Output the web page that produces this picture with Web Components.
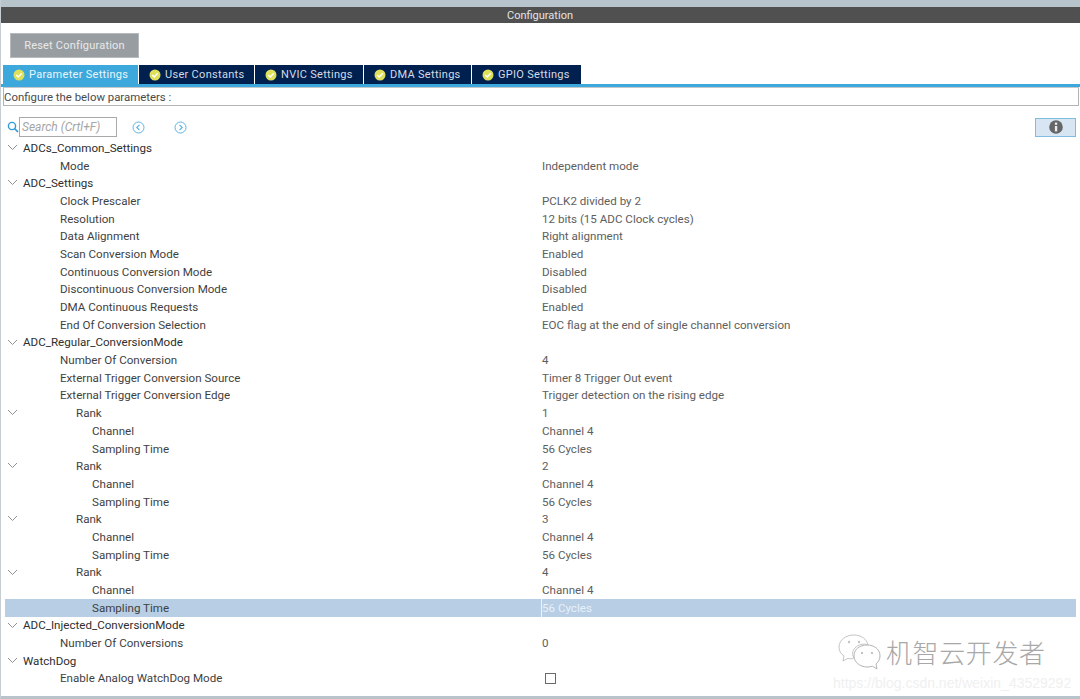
<!DOCTYPE html>
<html>
<head>
<meta charset="utf-8">
<title>Configuration</title>
<style>
  html, body { margin: 0; height: 100%; background: #fff; overflow: hidden; }
  body { font-family: Roboto, "Liberation Sans", Arial, sans-serif; font-size: 12px; color: #3c3c3c; }
</style>
</head>
<body>
<config-panel></config-panel>
<script>
const CHEVRON = `<svg width="11" height="7" viewBox="0 0 11 7"><path d="M1 1 L5.5 5.5 L10 1" fill="none" stroke="#8d9296" stroke-width="1"/></svg>`;

class ConfigTab extends HTMLElement {
  constructor() {
    super();
    this.attachShadow({ mode: 'open' }).innerHTML = `
      <style>
        :host {
          display: flex;
          align-items: center;
          box-sizing: border-box;
          height: 19px;
          padding-left: 10px;
          gap: 4px;
          background: #002050;
          color: #d4dbe4;
          font-size: 11px;
          letter-spacing: 0.3px;
          white-space: nowrap;
        }
        :host([active]) { background: #3ca8dc; color: #eaf5fb; }
        svg { flex: none; }
      </style>
      <svg width="12" height="12" viewBox="0 0 12 12">
        <circle cx="6" cy="6" r="5.5" fill="#dfe05a"/>
        <path d="M3.2 6 L5.2 8 L8.8 4.3" fill="none" stroke="#fff" stroke-width="1.5"/>
      </svg>
      <slot></slot>`;
  }
}

class SearchBar extends HTMLElement {
  constructor() {
    super();
    const nav = d => `<svg width="13" height="13" viewBox="0 0 13 13"><circle cx="6.5" cy="6.5" r="5.5" fill="none" stroke="#5ab4e4" stroke-width="1"/><path d="${d}" fill="none" stroke="#5ab4e4" stroke-width="1.2"/></svg>`;
    this.attachShadow({ mode: 'open' }).innerHTML = `
      <style>
        :host {
          display: flex;
          align-items: center;
          box-sizing: border-box;
          height: 20px;
          padding: 0 4px 0 6px;
        }
        .field {
          box-sizing: border-box;
          width: 98px;
          height: 20px;
          margin-left: 0;
          padding-left: 2px;
          border: 1px solid #a9a9a9;
          font-style: italic;
          font-size: 12px;
          line-height: 18px;
          color: #a5a5a5;
          white-space: nowrap;
        }
        .prev, .next { line-height: 0; height: 13px; }
        .prev { margin-left: 15px; }
        .next { margin-left: 29px; }
        .info {
          box-sizing: border-box;
          width: 41px;
          height: 19px;
          margin-left: auto;
          display: flex;
          align-items: center;
          justify-content: center;
          background: #d8e6f4;
          border: 1px solid #7fbde0;
        }
      </style>
      <svg width="12" height="12" viewBox="0 0 12 12"><circle cx="5" cy="5" r="3.6" fill="none" stroke="#2f9bd8" stroke-width="1.4"/><path d="M7.6 7.6 L11 11" stroke="#2f9bd8" stroke-width="1.6"/></svg>
      <div class="field">Search (Crtl+F)</div>
      <span class="prev">${nav('M7.5 3.8 L4.8 6.5 L7.5 9.2')}</span>
      <span class="next">${nav('M5.5 3.8 L8.2 6.5 L5.5 9.2')}</span>
      <div class="info">
        <svg width="14" height="14" viewBox="0 0 14 14">
          <circle cx="7" cy="7" r="6.8" fill="#666"/>
          <rect x="5.9" y="2.6" width="2.3" height="2.2" fill="#e8eef5"/>
          <rect x="5.9" y="6" width="2.3" height="5.4" fill="#e8eef5"/>
        </svg>
      </div>`;
  }
}

class ParamTree extends HTMLElement {
  constructor() {
    super();
    this.attachShadow({ mode: 'open' }).innerHTML = `
      <style>
        :host { display: block; font-size: 11.6px; color: #3f3f3f; }
        .row {
          display: grid;
          grid-template-columns: 536px 1fr;
          height: 17.7px;
          align-items: center;
          white-space: nowrap;
          position: relative;
        }
        .label { display: flex; align-items: center; height: 100%; }
        .chev { position: absolute; left: 2px; top: 5px; line-height: 0; }
        .value { color: #5e5e5e; height: 100%; display: flex; align-items: center; padding-left: 1px; }
        .l0 { padding-left: 18px; color: #2e2e2e; }
        .l1 { padding-left: 55px; }
        .l2 { padding-left: 71px; }
        .l3 { padding-left: 87px; }
        .selected { background: #b8cee5; }
        .selected .value { color: #e9f0f7; border-left: 1px solid #edf3f9; padding-left: 0; }
        .check {
          box-sizing: border-box;
          width: 11px;
          height: 11px;
          margin-left: 3px;
          border: 1px solid #6a6a6a;
          background: #fff;
        }
      </style>
      <div id="rows"></div>`;
  }

  set data(items) {
    this.shadowRoot.getElementById('rows').innerHTML = items.map(r => `
      <div class="row ${r.selected ? 'selected' : ''}">
        ${r.open ? `<span class="chev">${CHEVRON}</span>` : ''}
        <div class="label l${r.level}">${r.label}</div>
        <div class="value">${r.check ? '<div class="check"></div>' : (r.value ?? '')}</div>
      </div>`).join('');
  }
}

class WechatMark extends HTMLElement {
  constructor() {
    super();
    this.attachShadow({ mode: 'open' }).innerHTML = `
      <style>
        :host { position: absolute; left: 832px; top: 630px; width: 248px; height: 64px; pointer-events: none; }
        .top { display: flex; align-items: center; height: 44px; padding-left: 4px; gap: 5px; }
        .name {
          font-family: "Noto Sans CJK SC", sans-serif;
          font-size: 26px;
          font-weight: 300;
          letter-spacing: 0.6px;
          color: #a8a8a8;
          line-height: 1;
          white-space: nowrap;
        }
        .url {
          position: absolute;
          left: 0;
          top: 45px;
          font-family: "Liberation Sans", Arial, sans-serif;
          font-size: 14px;
          color: #f0f0f0;
          white-space: nowrap;
        }
      </style>
      <div class="top">
        <svg width="44" height="38" viewBox="0 0 44 38">
          <path d="M17 25 C15 22.5 15 18 18 15 C21 11.5 27 10 31 12 C30 6 24 2 17 2 C9 2 2 7 2 14 C2 18 4 21 7 23 L6 28 L11 25.3 C13 26 15 26 17 25 Z" fill="#fff" stroke="#c4c4c4" stroke-width="1"/>
          <path d="M43 23 C43 16 37 12 30 12 C23 12 17 16 17 23 C17 29 23 34 30 34 C32 34 34 33.8 35.5 33.2 L40 36 L39 31 C41.5 29 43 26 43 23 Z" fill="#fff" stroke="#b4b4b4" stroke-width="1"/>
          <circle cx="12" cy="9" r="1.2" fill="#c2c2c2"/><circle cx="22" cy="9" r="1.2" fill="#c2c2c2"/>
          <circle cx="25" cy="20" r="1.1" fill="#b4b4b4"/><circle cx="35" cy="20" r="1.1" fill="#b4b4b4"/>
        </svg>
        <span class="name">机智云开发者</span>
      </div>
      <div class="url">https://blog.csdn.net/weixin_43529292</div>`;
  }
}

class ConfigPanel extends HTMLElement {
  constructor() {
    super();
    this.attachShadow({ mode: 'open' }).innerHTML = `
      <style>
        :host {
          display: flex;
          flex-direction: column;
          box-sizing: border-box;
          position: relative;
          width: 1080px;
          height: 699px;
          background: #fff;
          border-left: 1px solid #c6ced4;
          overflow: hidden;
        }
        .top { height: 7px; margin-left: -1px; background: #b8c4cb; flex: none; }
        .title {
          height: 16px;
          margin-left: -1px;
          flex: none;
          background: #505050;
          color: #e4e4e4;
          font-size: 11px;
          line-height: 17px;
          text-align: center;
        }
        .reset {
          box-sizing: border-box;
          flex: none;
          align-self: flex-start;
          width: 129px;
          height: 25px;
          margin: 10px 0 0 9px;
          background: #989da1;
          border: 1px solid #b6babd;
          color: #e8eaeb;
          font-size: 11px;
          letter-spacing: 0.2px;
          line-height: 23px;
          text-align: center;
        }
        .tabs { display: flex; gap: 1px; height: 19px; margin: 7px 0 0 2px; flex: none; }
        .tabs config-tab:nth-child(1) { width: 135px; }
        .tabs config-tab:nth-child(2) { width: 115px; }
        .tabs config-tab:nth-child(3) { width: 108px; }
        .tabs config-tab:nth-child(4) { width: 107px; }
        .tabs config-tab:nth-child(5) { width: 109px; }
        .rule { height: 3px; background: #3ca8dc; flex: none; }
        .hint {
          box-sizing: border-box;
          flex: none;
          height: 19px;
          margin-left: 2px;
          margin-right: 1px;
          border: 1px solid #b4b4b4;
          border-top: 1px solid #c4c8cb;
          color: #4a4a4a;
          font-size: 11.4px;
          line-height: 19px;
        }
        search-bar { margin-top: 11px; flex: none; }
        param-tree { margin: 2px 4px 0 4px; flex: none; }
        .bottom { position: absolute; left: -1px; right: 0; bottom: 0; height: 3px; background: #b8c4cb; }
      </style>
      <div class="top"></div>
      <div class="title">Configuration</div>
      <div class="reset">Reset Configuration</div>
      <div class="tabs">
        <config-tab active>Parameter Settings</config-tab>
        <config-tab>User Constants</config-tab>
        <config-tab>NVIC Settings</config-tab>
        <config-tab>DMA Settings</config-tab>
        <config-tab>GPIO Settings</config-tab>
      </div>
      <div class="rule"></div>
      <div class="hint">Configure the below parameters :</div>
      <search-bar></search-bar>
      <param-tree></param-tree>
      <div class="bottom"></div>
      <wechat-mark></wechat-mark>`;

    const rankRows = n => [
      { level: 2, label: 'Rank', value: String(n), open: true },
      { level: 3, label: 'Channel', value: 'Channel 4' },
      { level: 3, label: 'Sampling Time', value: '56 Cycles', selected: n === 4 },
    ];

    this.shadowRoot.querySelector('param-tree').data = [
      { level: 0, label: 'ADCs_Common_Settings', open: true },
      { level: 1, label: 'Mode', value: 'Independent mode' },
      { level: 0, label: 'ADC_Settings', open: true },
      { level: 1, label: 'Clock Prescaler', value: 'PCLK2 divided by 2' },
      { level: 1, label: 'Resolution', value: '12 bits (15 ADC Clock cycles)' },
      { level: 1, label: 'Data Alignment', value: 'Right alignment' },
      { level: 1, label: 'Scan Conversion Mode', value: 'Enabled' },
      { level: 1, label: 'Continuous Conversion Mode', value: 'Disabled' },
      { level: 1, label: 'Discontinuous Conversion Mode', value: 'Disabled' },
      { level: 1, label: 'DMA Continuous Requests', value: 'Enabled' },
      { level: 1, label: 'End Of Conversion Selection', value: 'EOC flag at the end of single channel conversion' },
      { level: 0, label: 'ADC_Regular_ConversionMode', open: true },
      { level: 1, label: 'Number Of Conversion', value: '4' },
      { level: 1, label: 'External Trigger Conversion Source', value: 'Timer 8 Trigger Out event' },
      { level: 1, label: 'External Trigger Conversion Edge', value: 'Trigger detection on the rising edge' },
      ...rankRows(1),
      ...rankRows(2),
      ...rankRows(3),
      ...rankRows(4),
      { level: 0, label: 'ADC_Injected_ConversionMode', open: true },
      { level: 1, label: 'Number Of Conversions', value: '0' },
      { level: 0, label: 'WatchDog', open: true },
      { level: 1, label: 'Enable Analog WatchDog Mode', check: true },
    ];
  }
}

customElements.define('config-tab', ConfigTab);
customElements.define('search-bar', SearchBar);
customElements.define('param-tree', ParamTree);
customElements.define('wechat-mark', WechatMark);
customElements.define('config-panel', ConfigPanel);
</script>
</body>
</html>
